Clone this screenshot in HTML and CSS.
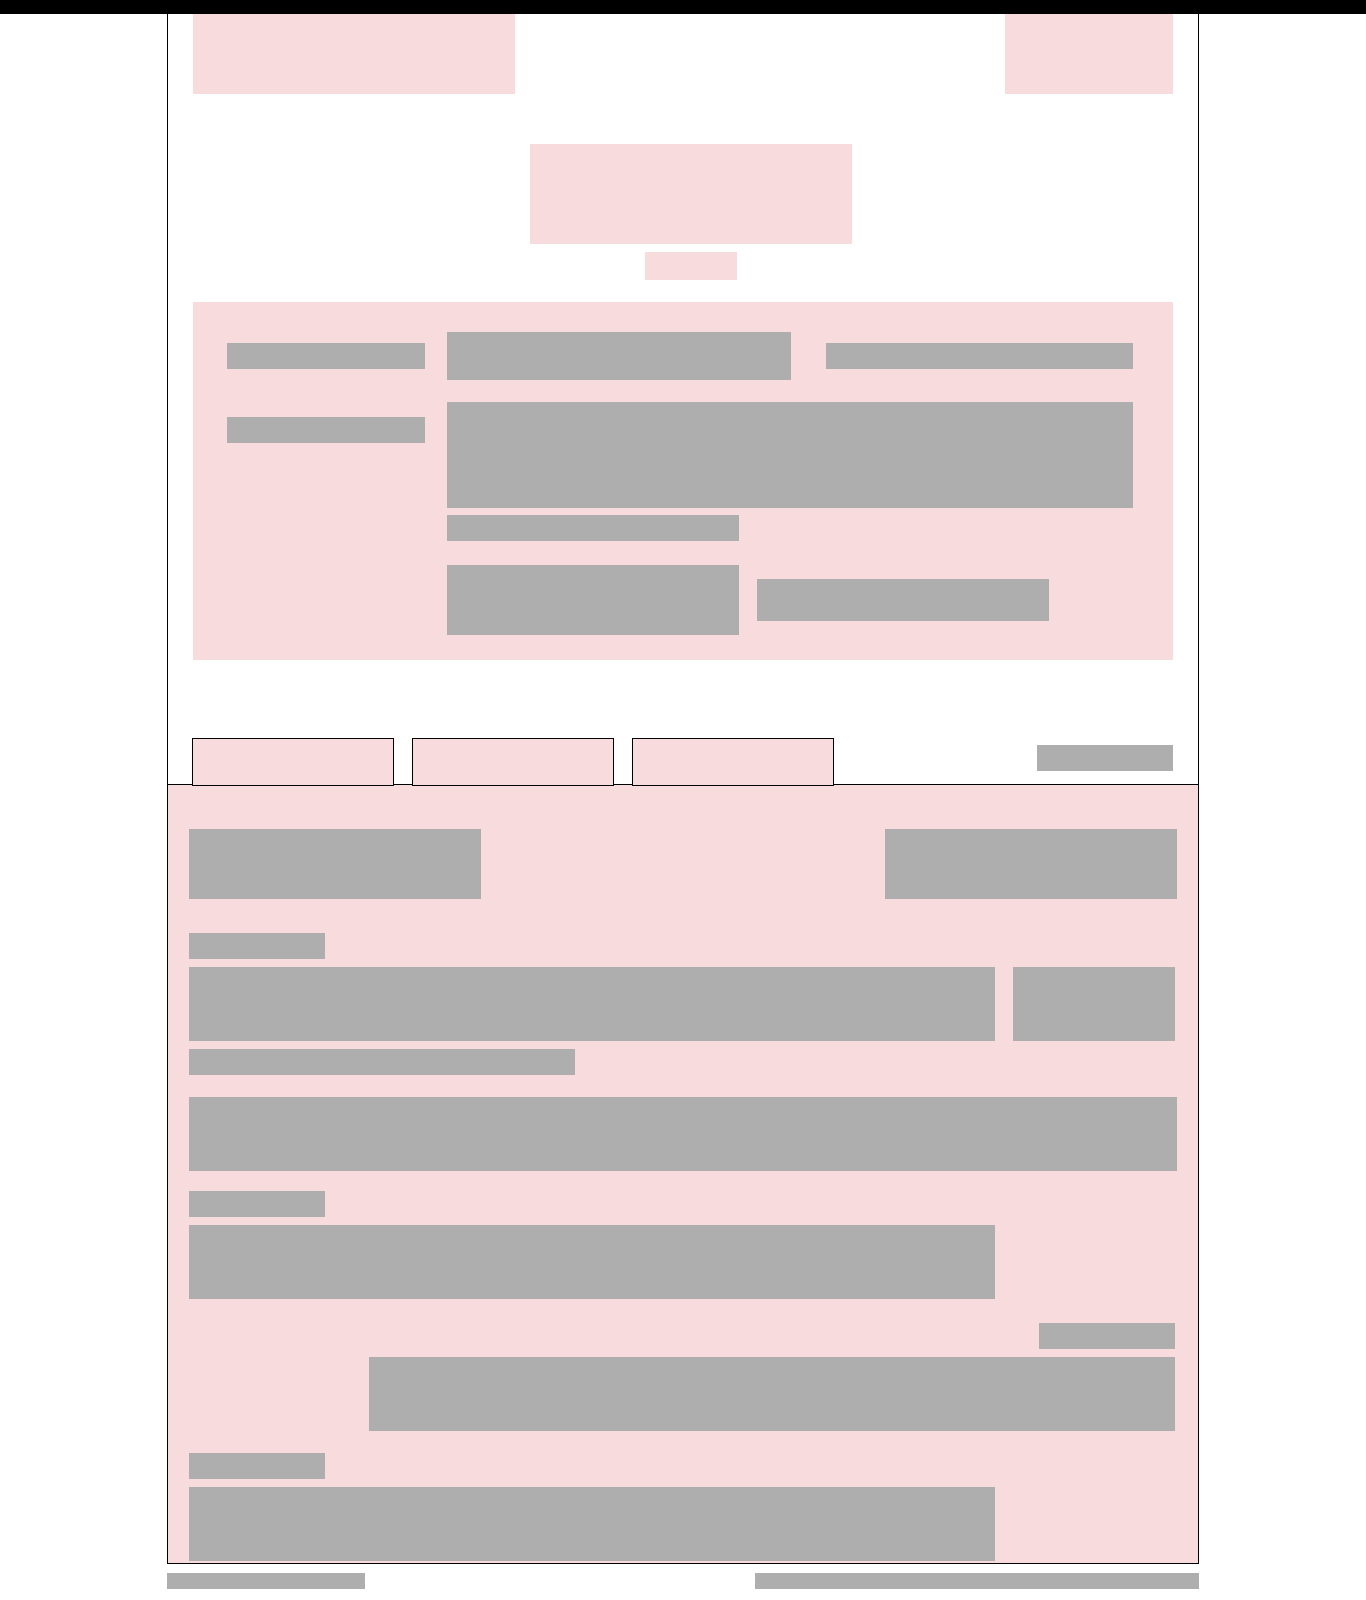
FILE: index.html
```html
<!DOCTYPE html>
<html lang="en">
<head>
    <meta charset="UTF-8">
    <meta name="viewport" content="width=device-width, initial-scale=1.0">
    <title>Chat</title>
    <link rel="stylesheet" href="styles.css">
</head>
<body>
    <div class="topbar"></div>

    <div class="wrap">
        <div class="page">
            <div class="header">
                <div class="img logo"></div>
                <div class="img account"></div>
            </div>

            <div class="hero">
                <div class="img hero-title"></div>
                <div class="img hero-sub"></div>
            </div>

            <div class="search">
                <div class="txt field-label row-center"></div>
                <div class="search-top">
                    <div class="txt search-input"></div>
                    <div class="txt search-note"></div>
                </div>

                <div class="txt field-label label-top"></div>
                <div class="search-body">
                    <div class="txt search-area"></div>
                    <div class="txt search-hint"></div>
                    <div class="search-actions">
                        <div class="txt search-btn"></div>
                        <div class="txt search-extra"></div>
                    </div>
                </div>
            </div>

            <div class="tabs-row">
                <div class="tab"></div>
                <div class="tab"></div>
                <div class="tab"></div>
                <div class="txt tabs-meta"></div>
            </div>

            <div class="panel">
                <div class="panel-head">
                    <div class="txt head-block"></div>
                    <div class="txt head-block"></div>
                </div>

                <div class="msg first">
                    <div class="txt msg-name"></div>
                    <div class="msg-line">
                        <div class="txt bubble"></div>
                        <div class="txt bubble-side"></div>
                    </div>
                    <div class="txt msg-hint"></div>
                </div>

                <div class="txt notice"></div>

                <div class="msg">
                    <div class="txt msg-name"></div>
                    <div class="txt bubble"></div>
                </div>

                <div class="msg mine">
                    <div class="txt msg-name"></div>
                    <div class="txt bubble"></div>
                </div>

                <div class="msg last">
                    <div class="txt msg-name"></div>
                    <div class="txt bubble"></div>
                </div>
            </div>
        </div>

        <div class="footer">
            <div class="txt foot-left"></div>
            <div class="txt foot-right"></div>
        </div>
    </div>
</body>
</html>
```

FILE: styles.css
```css
body {
    margin: 0;
    font-family: "Liberation Sans", Arial, sans-serif;
    background: #fff;
}
.topbar {
    height: 14px;
    background-color: #000;
}
.wrap {
    width: 1032px;
    margin: 0 auto;
}
.page {
    border-left: 1px solid #000;
    border-right: 1px solid #000;
}
.img {
    background-color: #f8dbdc;
}
.txt {
    background-color: #afaeae;
}

/* header */
.header {
    display: flex;
    justify-content: space-between;
    padding: 0 25px;
}
.logo {
    width: 322px;
    height: 80px;
}
.account {
    width: 168px;
    height: 80px;
}

/* hero */
.hero {
    display: flex;
    flex-direction: column;
    align-items: center;
    padding: 50px 25px 0 41px;
}
.hero-title {
    width: 322px;
    height: 100px;
}
.hero-sub {
    width: 92px;
    height: 28px;
    margin-top: 8px;
}

/* search box */
.search {
    margin: 22px 25px 0;
    padding: 30px 40px 25px 34px;
    background-color: #f8dbdc;
    display: grid;
    grid-template-columns: 198px 1fr;
    column-gap: 22px;
    row-gap: 22px;
}
.field-label {
    width: 198px;
    height: 26px;
}
.row-center {
    align-self: center;
}
.label-top {
    align-self: start;
    margin-top: 15px;
}
.search-top {
    display: flex;
    align-items: center;
}
.search-input {
    width: 344px;
    height: 48px;
}
.search-note {
    width: 307px;
    height: 26px;
    margin-left: 35px;
}
.search-area {
    width: 686px;
    height: 106px;
}
.search-hint {
    width: 292px;
    height: 26px;
    margin-top: 7px;
}
.search-actions {
    display: flex;
    align-items: center;
    gap: 18px;
    margin-top: 24px;
}
.search-btn {
    width: 292px;
    height: 70px;
}
.search-extra {
    width: 292px;
    height: 42px;
}

/* tabs */
.tabs-row {
    display: flex;
    gap: 18px;
    margin-top: 78px;
    margin-bottom: -2px;
    padding: 0 25px 0 24px;
    position: relative;
    z-index: 1;
}
.tab {
    box-sizing: border-box;
    width: 202px;
    height: 48px;
    border: 1px solid #000;
    background-color: #f8dbdc;
}
.tabs-meta {
    width: 136px;
    height: 26px;
    margin-left: auto;
    margin-top: 7px;
}

/* chat panel */
.panel {
    border-top: 1px solid #000;
    border-bottom: 1px solid #000;
    background-color: #f8dbdc;
    padding: 44px 21px 2px;
}
.panel-head {
    display: flex;
    justify-content: space-between;
}
.head-block {
    width: 292px;
    height: 70px;
}
.msg {
    display: flex;
    flex-direction: column;
    align-items: flex-start;
    gap: 8px;
    margin-top: 20px;
}
.msg.first {
    margin-top: 34px;
}
.msg.mine {
    align-items: flex-end;
    margin-top: 24px;
    padding-right: 2px;
}
.msg.last {
    margin-top: 22px;
}
.msg-name {
    width: 136px;
    height: 26px;
}
.msg-line {
    display: flex;
    gap: 18px;
}
.bubble {
    width: 806px;
    height: 74px;
}
.bubble-side {
    width: 162px;
    height: 74px;
}
.msg-hint {
    width: 386px;
    height: 26px;
}
.notice {
    height: 74px;
    margin-top: 22px;
}

/* footer */
.footer {
    display: flex;
    justify-content: space-between;
    margin-top: 9px;
}
.foot-left {
    width: 198px;
    height: 16px;
}
.foot-right {
    width: 444px;
    height: 16px;
}
```
